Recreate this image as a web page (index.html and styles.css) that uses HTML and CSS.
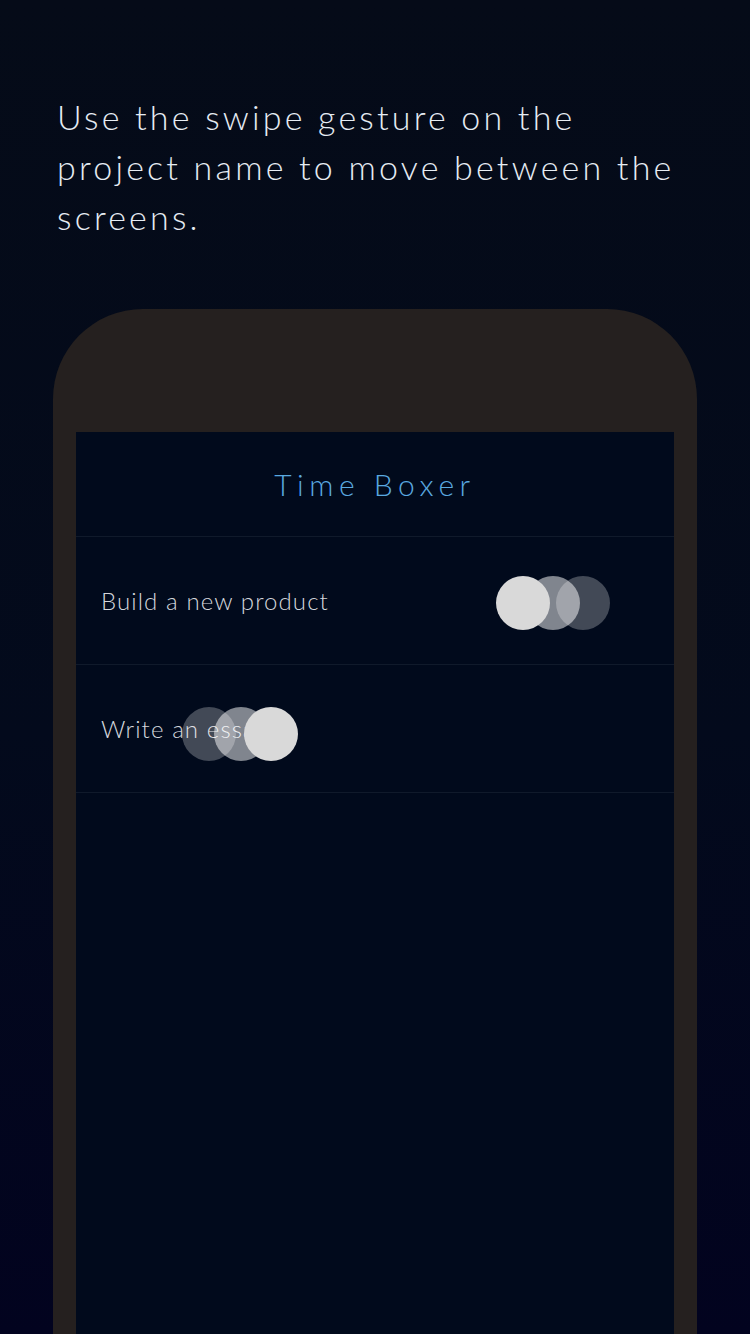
FILE: index.html
```html
<!DOCTYPE html>
<html lang="en">
<head>
  <meta charset="UTF-8">
  <meta name="viewport" content="width=device-width, initial-scale=1.0">
  <title>Time Boxer - Tutorial</title>
  <link rel="stylesheet" href="styles.css">
</head>
<body>
  <div class="page">
    <p class="intro">Use the swipe gesture on the project name to move between the screens.</p>

    <div class="phone">
      <div class="screen">
        <h1 class="app-title">Time Boxer</h1>

        <div class="project-row">
          <span class="project-name">Build a new product</span>
          <!-- swipe hint: bright dot leads to the left -->
          <div class="swipe-hint swipe-left">
            <span class="dot dot-solid"></span>
            <span class="dot dot-mid"></span>
            <span class="dot dot-faint"></span>
          </div>
        </div>

        <div class="project-row">
          <span class="project-name">Write an essay</span>
          <!-- swipe hint: bright dot leads to the right -->
          <div class="swipe-hint swipe-right">
            <span class="dot dot-faint"></span>
            <span class="dot dot-mid"></span>
            <span class="dot dot-solid"></span>
          </div>
        </div>
      </div>
    </div>
  </div>
</body>
</html>
```

FILE: styles.css
```css
html, body {
  margin: 0;
  padding: 0;
  height: 100%;
}

body {
  font-family: 'Lato', 'Open Sans', sans-serif;
  background: linear-gradient(180deg, #050b18 0%, #030a1c 55%, #02031f 100%);
  overflow: hidden;
}

.page {
  height: 1334px;
  display: flex;
  flex-direction: column;
}

.intro {
  margin: 0;
  padding: 92px 63px 0 57px;
  font-size: 34px;
  font-weight: 300;
  line-height: 50px;
  letter-spacing: 3.2px;
  color: #e6ecf3;
}

.phone {
  margin: 67px 53px 0 53px;
  padding: 123px 23px 0 23px;
  background-color: #25201f;
  border-radius: 90px 90px 0 0;
  flex: 1;
  display: flex;
}

.screen {
  flex: 1;
  background-color: #010a1c;
}

.app-title {
  margin: 0;
  height: 104px;
  display: flex;
  align-items: center;
  justify-content: center;
  font-size: 30px;
  font-weight: 300;
  letter-spacing: 5.5px;
  color: #5aa9e0;
  border-bottom: 1px solid #101a2b;
}

.project-row {
  position: relative;
  height: 127px;
  display: flex;
  align-items: center;
  padding-left: 25px;
  border-bottom: 1px solid #101a2b;
}

.project-name {
  font-size: 24px;
  font-weight: 300;
  color: #d4d7dc;
  letter-spacing: 1.1px;
}

/* 指示用の丸 */
.swipe-hint {
  position: absolute;
  top: 39px;
  display: flex;
}

.swipe-left {
  left: 420px;
}

.swipe-right {
  left: 106px;
  top: 42px;
}

.dot {
  width: 54px;
  height: 54px;
  border-radius: 50%;
  flex-shrink: 0;
}

.dot + .dot {
  margin-left: -24px;
}

.dot-solid {
  background-color: #d9d9d9;
}

.dot-mid {
  background-color: rgba(255, 255, 255, 0.5);
}

.dot-faint {
  background-color: rgba(255, 255, 255, 0.26);
}

.swipe-left .dot-solid {
  position: relative;
  z-index: 2;
}

.swipe-left .dot-mid {
  position: relative;
  z-index: 1;
}

.swipe-right .dot-mid {
  margin-left: -22px;
}
```
